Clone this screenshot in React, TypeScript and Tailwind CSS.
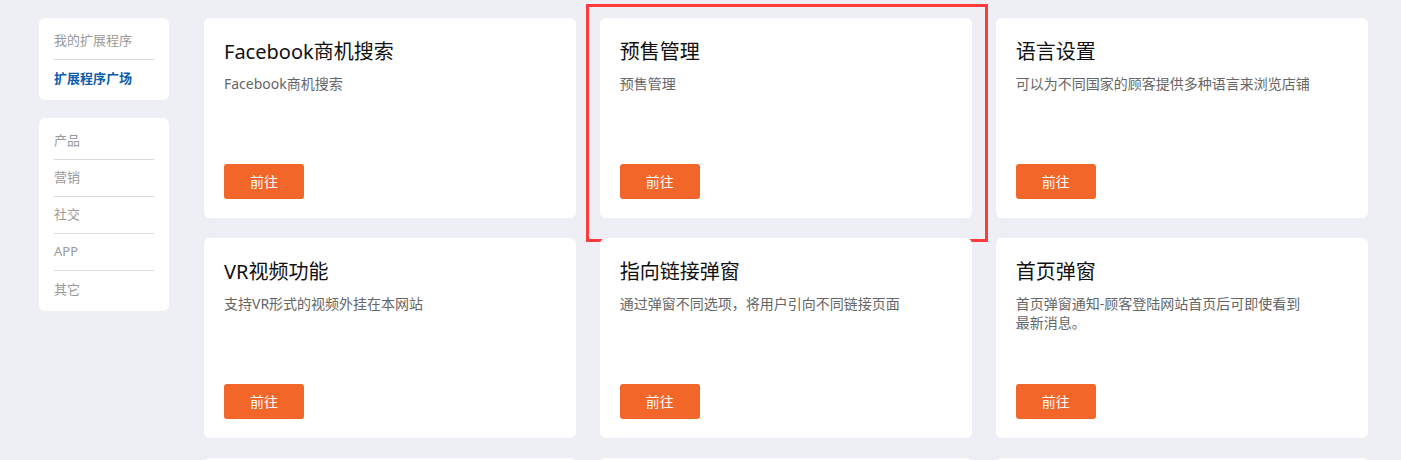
import React from "react";

type Card = { title: string; desc: React.ReactNode; highlight?: boolean };

const cards: Card[] = [
  { title: "Facebook商机搜索", desc: "Facebook商机搜索" },
  { title: "预售管理", desc: "预售管理", highlight: true },
  { title: "语言设置", desc: "可以为不同国家的顾客提供多种语言来浏览店铺" },
  { title: "VR视频功能", desc: "支持VR形式的视频外挂在本网站" },
  { title: "指向链接弹窗", desc: "通过弹窗不同选项，将用户引向不同链接页面" },
  {
    title: "首页弹窗",
    desc: (
      <>
        首页弹窗通知-顾客登陆网站首页后可即使看到
        <br />
        最新消息。
      </>
    ),
  },
];

function SideItem({ label, active, last }: { label: string; active?: boolean; last?: boolean }) {
  return (
    <div
      className={
        "h-[37px] flex items-center text-[13px] " +
        (last ? "" : "border-b border-[#dcdcdf] ") +
        (active ? "text-[#0b5cab] font-bold" : "text-[#999999]")
      }
    >
      {label}
    </div>
  );
}

export default function App() {
  return (
    <div
      className="min-h-[460px] w-full bg-[#eeeff4] overflow-hidden"
      style={{ fontFamily: '"Noto Sans", "Noto Sans CJK SC", sans-serif' }}
    >
      <div className="flex gap-[35px] pl-[39px] pr-[33px] pt-[18px]">
        <div className="w-[130px] shrink-0 flex flex-col gap-[18px]">
          <div className="bg-white rounded-md px-[15px] pt-[5px] pb-[3px]">
            <SideItem label="我的扩展程序" />
            <SideItem label="扩展程序广场" active last />
          </div>
          <div className="bg-white rounded-md px-[15px] pt-[5px] pb-[3px]">
            <SideItem label="产品" />
            <SideItem label="营销" />
            <SideItem label="社交" />
            <SideItem label="APP" />
            <SideItem label="其它" last />
          </div>
        </div>
        <div className="flex-1 grid grid-cols-3 gap-x-[23.5px] gap-y-[20px]">
          {cards.map((c, i) => (
            <div key={i} className="relative">
              <div className="bg-white rounded-md h-[200px] px-[20px] pt-[20px] pb-[19px] flex flex-col">
                <div className="text-[20px] leading-[28px] text-[#111111]">{c.title}</div>
                <div className="mt-[8px] text-[14px] leading-[19px] text-[#666666]">{c.desc}</div>
                <div className="mt-auto">
                  <button className="w-[80px] h-[35px] rounded-[3px] bg-[#f3662a] text-white text-[14px] flex items-center justify-center">
                    前往
                  </button>
                </div>
              </div>
              {c.highlight && (
                <div className="absolute -left-[14px] -top-[14px] w-[402px] h-[238px] border-[3px] border-[#ff3b3e] pointer-events-none" />
              )}
            </div>
          ))}
          <div className="bg-white rounded-md h-[200px]" />
          <div className="bg-white rounded-md h-[200px]" />
          <div className="bg-white rounded-md h-[200px]" />
        </div>
      </div>
    </div>
  );
}
